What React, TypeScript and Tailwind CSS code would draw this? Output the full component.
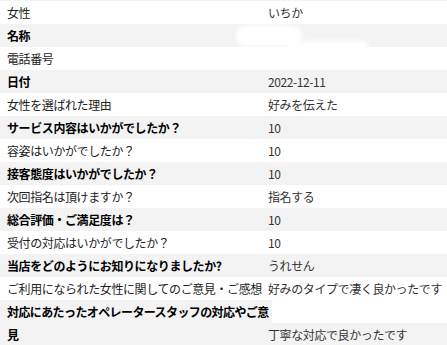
import React from "react";

type Row = { label: string; value: string; gray: boolean };

const rows: Row[] = [
  { label: "女性", value: "いちか", gray: false },
  { label: "名称", value: "", gray: true },
  { label: "電話番号", value: "", gray: false },
  { label: "日付", value: "2022-12-11", gray: true },
  { label: "女性を選ばれた理由", value: "好みを伝えた", gray: false },
  { label: "サービス内容はいかがでしたか？", value: "10", gray: true },
  { label: "容姿はいかがでしたか？", value: "10", gray: false },
  { label: "接客態度はいかがでしたか？", value: "10", gray: true },
  { label: "次回指名は頂けますか？", value: "指名する", gray: false },
  { label: "総合評価・ご満足度は？", value: "10", gray: true },
  { label: "受付の対応はいかがでしたか？", value: "10", gray: false },
  { label: "当店をどのようにお知りになりましたか?", value: "うれせん", gray: true },
  { label: "ご利用になられた女性に関してのご意見・ご感想", value: "好みのタイプで凄く良かったです", gray: false },
];

const font = {
  fontFamily: '"Noto Sans CJK JP", "Liberation Sans", sans-serif',
};

export default function App() {
  return (
    <div className="relative w-[447px] h-[345px] overflow-hidden bg-white text-[12px] leading-[23px] tracking-[-0.4px] text-[#222]" style={font}>
      <div className="h-[1px] bg-[#f3f3f3]" />
      {rows.map((r, i) => (
        <div key={i} className={`grid grid-cols-[268px_179px] h-[23px] ${r.gray ? "bg-[#f3f3f3]" : "bg-white"}`}>
          <div className={`pl-[7px] whitespace-nowrap ${r.gray ? "font-bold text-black" : "text-[#222]"}`}>
            {r.label}
          </div>
          <div className="whitespace-nowrap text-[#333]">{r.value}</div>
        </div>
      ))}
      <div className="grid grid-cols-[272px_175px] bg-[#f3f3f3]">
        <div className="pl-[7px] font-bold text-black">
          <div className="relative z-10 h-[23px] whitespace-nowrap tracking-[-0.6px]">対応にあたったオペレータースタッフの対応やご意</div>
          <div className="h-[23px]">見</div>
        </div>
        <div className="flex flex-col">
          <div className="h-[23px] bg-white" />
          <div className="h-[23px] -ml-[4px] whitespace-nowrap text-[#333]">丁寧な対応で良かったです</div>
        </div>
      </div>
      <div className="absolute left-[236px] top-[25px] w-[66px] h-[22px] rounded-full bg-white blur-[2px]" />
      <div className="absolute left-[290px] top-[41px] w-[78px] h-[8px] rounded-full bg-white blur-[2px]" />
    </div>
  );
}
